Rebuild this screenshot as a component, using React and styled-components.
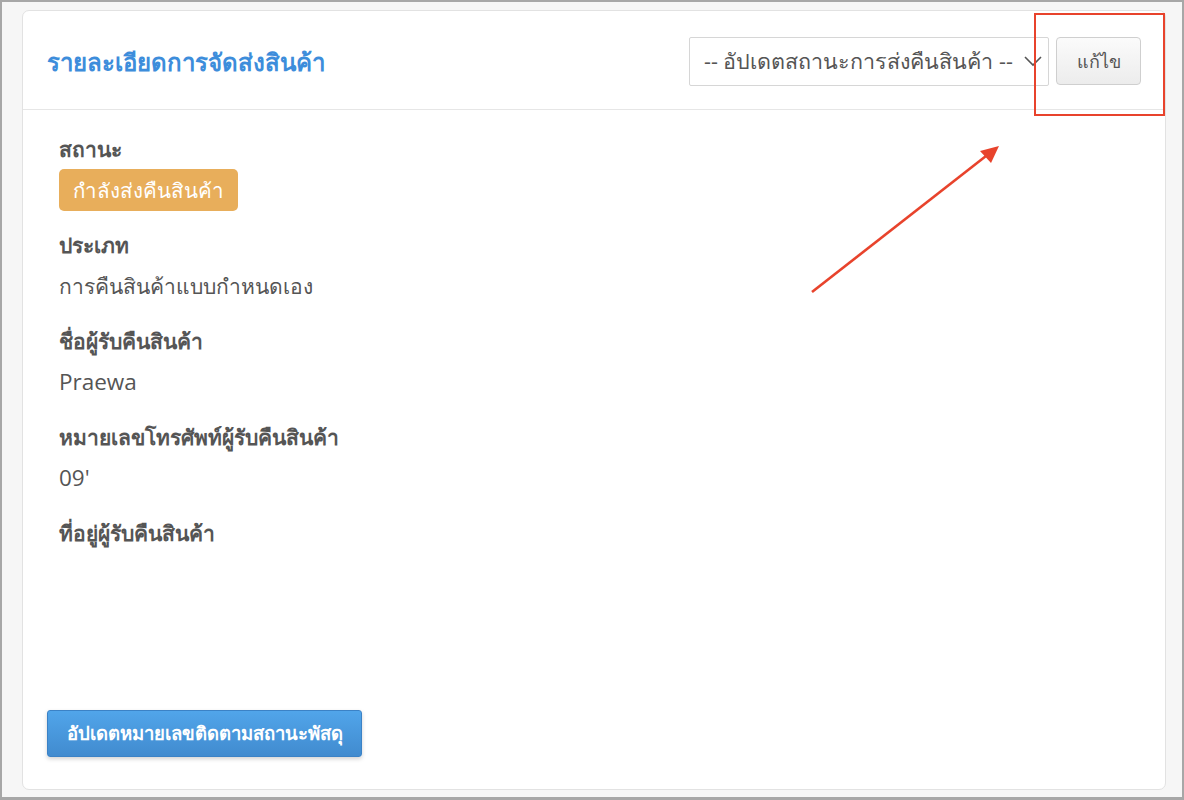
import React from "react";
import styled, { createGlobalStyle } from "styled-components";

const Global = createGlobalStyle`
  html, body { margin: 0; padding: 0; }
  body {
    width: 1184px; height: 800px; overflow: hidden;
    font-family: "Open Sans", "Noto Sans", sans-serif;
  }
  * { box-sizing: border-box; }
`;

const Frame = styled.div`
  width: 1184px; height: 800px;
  border: solid #a7a7a7;
  border-width: 2px 2px 3px 2px;
  background: #f6f6f6;
  padding: 8px 16px 7px 20px;
  position: relative;
`;

const Card = styled.div`
  height: 100%;
  background: #fff;
  border: 1px solid #e2e2e2;
  border-radius: 7px;
  display: flex; flex-direction: column;
`;

const Header = styled.div`
  height: 99px;
  border-bottom: 1px solid #e6e6e6;
  display: flex; align-items: center; justify-content: space-between;
  padding: 0 24px 0 24px;
`;

const Title = styled.h2`
  margin: 0; font-size: 24px; font-weight: 600; color: #3d8ddb;
  padding-top: 4px;
`;

const Actions = styled.div`
  display: flex; gap: 7px; align-items: center; margin-top: 2px;
`;

const Select = styled.div`
  width: 360px; height: 49px; border: 1px solid #d6d6d6; border-radius: 2px;
  display: flex; align-items: center; justify-content: space-between;
  padding: 0 5px 0 14px; color: #555; font-size: 21.5px;
`;

const Button = styled.button`
  width: 85px; height: 48px; border: 1px solid #cfcfcf; border-radius: 4px;
  background: linear-gradient(#fbfbfb, #ececec);
  color: #555; font-size: 18px; font-family: inherit;
`;

const Body = styled.div`
  flex: 1; display: flex; flex-direction: column;
  padding: 31px 36px 32px 36px;
`;

const Field = styled.div`
  display: flex; flex-direction: column; align-items: flex-start;
  margin-bottom: 26px;
`;

const Label = styled.div`
  font-size: 21px; font-weight: 700; color: #555; line-height: 40px; height: 40px;
  margin-top: -12px;
`;

const Value = styled.div`
  font-size: 21px; color: #555; line-height: 42px; min-height: 42px;
`;

const Latin = styled.span`
  font-size: 22.5px;
`;

const Badge = styled.span`
  display: inline-block; background: #e8ae5b; color: #fff; border-radius: 5px;
  font-size: 20.5px; height: 42px; line-height: 42px; padding: 0 14px;
`;

const Spacer = styled.div` flex: 1; `;

const Primary = styled.button`
  align-self: flex-start; margin-left: -12px;
  width: 315px; height: 47px; border: 1px solid #3b82c6; border-radius: 3px;
  background: linear-gradient(#51a5ea, #418bcf);
  color: #fff; font-size: 18.5px; font-weight: 700; font-family: inherit;
  box-shadow: 0 2px 4px rgba(0,0,0,0.18);
`;

const Overlay = styled.svg`
  position: absolute; left: 0; top: 0; pointer-events: none;
`;

export default function App() {
  return (
    <>
      <Global />
      <Frame>
        <Card>
          <Header>
            <Title>รายละเอียดการจัดส่งสินค้า</Title>
            <Actions>
              <Select>
                <span>-- อัปเดตสถานะการส่งคืนสินค้า --</span>
                <svg width="20" height="14" viewBox="0 0 20 14">
                  <path d="M2 3 L10 11 L18 3" fill="none" stroke="#555" strokeWidth="1.6" />
                </svg>
              </Select>
              <Button>แก้ไข</Button>
            </Actions>
          </Header>
          <Body>
            <Field>
              <Label>สถานะ</Label>
              <Badge>กำลังส่งคืนสินค้า</Badge>
            </Field>
            <Field>
              <Label>ประเภท</Label>
              <Value>การคืนสินค้าแบบกำหนดเอง</Value>
            </Field>
            <Field>
              <Label>ชื่อผู้รับคืนสินค้า</Label>
              <Value><Latin>Praewa</Latin></Value>
            </Field>
            <Field>
              <Label>หมายเลขโทรศัพท์ผู้รับคืนสินค้า</Label>
              <Value><Latin>09'</Latin></Value>
            </Field>
            <Field>
              <Label>ที่อยู่ผู้รับคืนสินค้า</Label>
            </Field>
            <Spacer />
            <Primary>อัปเดตหมายเลขติดตามสถานะพัสดุ</Primary>
          </Body>
        </Card>
        <Overlay width="1184" height="800" viewBox="0 0 1184 800">
          <rect x="1033" y="12" width="129" height="101" fill="none" stroke="#e8432c" strokeWidth="2" />
          <line x1="810" y1="290" x2="984" y2="154" stroke="#e8432c" strokeWidth="2.6" />
          <polygon points="997,144 978,149 989,161" fill="#e8432c" />
        </Overlay>
      </Frame>
    </>
  );
}
